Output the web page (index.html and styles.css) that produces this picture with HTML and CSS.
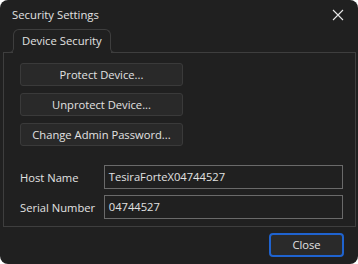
FILE: index.html
```html
<!DOCTYPE html>
<html>
<head>
<meta charset="utf-8">
<link rel="stylesheet" href="styles.css">
</head>
<body>
<div class="dialog">
  <div class="titlebar">
    <span class="title">Security Settings</span>
    <svg class="close-x" width="12" height="12" viewBox="0 0 12 12"><path d="M1 1 L11 11 M11 1 L1 11" stroke="#e6e6e6" stroke-width="1.1" fill="none"/></svg>
  </div>
  <div class="tabrow">
    <div class="tab">Device Security<span class="cover cover-l"></span><span class="cover cover-r"></span><span class="flare flare-l"></span><span class="flare flare-r"></span></div>
  </div>
  <div class="panel">
    <div class="buttons">
      <div class="btn">Protect Device...</div>
      <div class="btn">Unprotect Device...</div>
      <div class="btn">Change Admin Password...</div>
    </div>
    <div class="fields">
      <div class="field"><span class="label">Host Name</span><div class="input">TesiraForteX04744527</div></div>
      <div class="field"><span class="label">Serial Number</span><div class="input">04744527</div></div>
    </div>
  </div>
  <div class="footer">
    <div class="close-btn">Close</div>
  </div>
</div>
</body>
</html>
```

FILE: styles.css
```css
html, body { margin: 0; padding: 0; background: #ffffff; }
body { font-family: "Open Sans", "Noto Sans", sans-serif; font-size: 11.2px; color: #e2e2e2; }
.dialog { width: 358px; height: 264px; background: #202020; border-radius: 8px; display: flex; flex-direction: column; box-sizing: border-box; overflow: hidden; }
.titlebar { height: 29px; display: flex; align-items: center; justify-content: space-between; padding: 0 14px 0 12px; box-sizing: border-box; }
.title { font-size: 11.3px; line-height: 28px; }
.close-x { display: block; }
.tabrow { display: flex; padding-left: 13px; position: relative; z-index: 2; }
.tab { position: relative; box-sizing: border-box; border: 1px solid #3e3e3e; border-bottom: none; border-radius: 6px 6px 0 0; padding: 0 8px 0 8px; margin-bottom: -1px; background: #202020; line-height: 22px; font-size: 11.3px; height: 24px; }
.cover { position: absolute; bottom: 0; width: 1px; height: 4px; background: #202020; }
.cover-l { left: -1px; }
.cover-r { right: -1px; }
.flare { position: absolute; bottom: 0; width: 4px; height: 4px; border-bottom: 1px solid #3e3e3e; }
.flare-l { left: -5px; border-right: 1px solid #3e3e3e; border-bottom-right-radius: 5px; }
.flare-r { right: -5px; border-left: 1px solid #3e3e3e; border-bottom-left-radius: 5px; }
.panel { margin: 0 2px 0 3px; height: 175px; box-sizing: border-box; border: 1px solid #3e3e3e; padding: 10px 12px 0 16px; position: relative; z-index: 1; }
.buttons { display: flex; flex-direction: column; gap: 7px; width: 163px; }
.btn { height: 23px; box-sizing: border-box; border: 1px solid #3a3a3a; border-radius: 3px; background: #292929; text-align: center; line-height: 21px; }
.fields { margin-top: 19px; display: flex; flex-direction: column; gap: 6px; }
.field { display: flex; align-items: center; }
.label { width: 84px; }
.input { width: 240px; height: 24px; box-sizing: border-box; border: 1px solid #6a6a6a; padding-left: 4px; line-height: 22px; }
.footer { display: flex; justify-content: flex-end; padding: 6px 14px 0 0; }
.close-btn { width: 75px; height: 24px; box-sizing: border-box; border: 2px solid #1f63cf; border-radius: 4px; background: #2a2a2a; text-align: center; line-height: 20px; }
```
